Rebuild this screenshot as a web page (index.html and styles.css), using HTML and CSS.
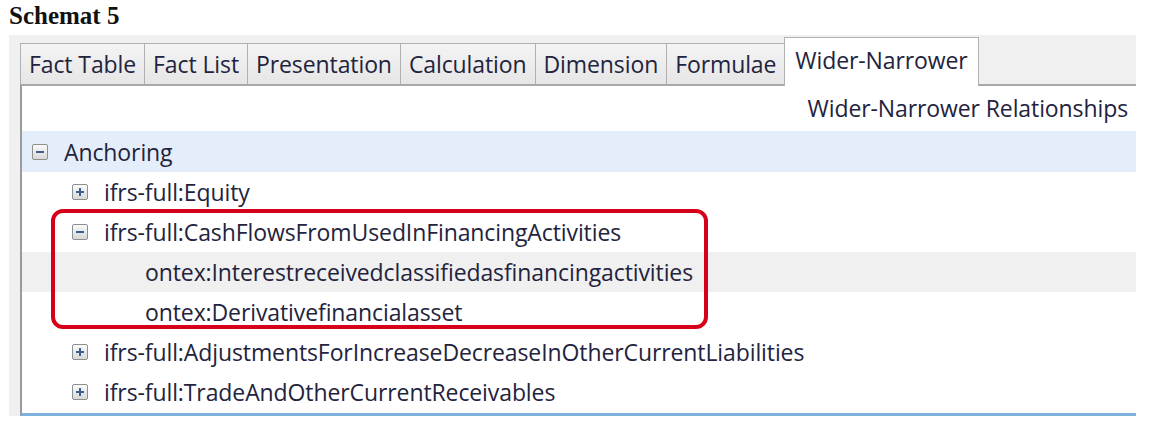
FILE: index.html
```html
<!DOCTYPE html>
<html lang="pl">

<head>
	<meta charset="UTF-8">
	<meta name="viewport" content="width=device-width, initial-scale=1.0">
	<title>Schemat 5</title>
	<link rel="stylesheet" href="styles.css">
</head>

<body>
	<h1 class="caption">Schemat 5</h1>

	<div class="panel">
		<div class="tabs">
			<div class="tab">Fact Table</div>
			<div class="tab">Fact List</div>
			<div class="tab">Presentation</div>
			<div class="tab">Calculation</div>
			<div class="tab">Dimension</div>
			<div class="tab">Formulae</div>
			<div class="tab active">Wider-Narrower</div>
		</div>

		<div class="content">
			<div class="heading">Wider-Narrower Relationships</div>

			<div class="row selected">
				<span class="toggle minus"></span>
				<span class="label">Anchoring</span>
			</div>
			<div class="row level1">
				<span class="toggle plus"></span>
				<span class="label">ifrs-full:Equity</span>
			</div>

			<div class="group marked">
				<div class="row level1">
					<span class="toggle minus"></span>
					<span class="label">ifrs-full:CashFlowsFromUsedInFinancingActivities</span>
				</div>
				<div class="row level2 alt">
					<span class="label">ontex:Interestreceivedclassifiedasfinancingactivities</span>
				</div>
				<div class="row level2">
					<span class="label">ontex:Derivativefinancialasset</span>
				</div>
			</div>

			<div class="row level1">
				<span class="toggle plus"></span>
				<span class="label">ifrs-full:AdjustmentsForIncreaseDecreaseInOtherCurrentLiabilities</span>
			</div>
			<div class="row level1">
				<span class="toggle plus"></span>
				<span class="label">ifrs-full:TradeAndOtherCurrentReceivables</span>
			</div>
		</div>
	</div>
</body>

</html>
```

FILE: styles.css
```css
html,
body {
	margin: 0;
	padding: 0;
	background-color: white;
}

body {
	width: 1156px;
	height: 431px;
	overflow: hidden;
}

.caption {
	margin: 0;
	padding: 1px 0 0 9px;
	height: 35px;
	box-sizing: border-box;
	font-family: "Liberation Serif", serif;
	font-size: 25px;
	font-weight: bold;
	line-height: 30px;
	color: #111;
}

.panel {
	margin-left: 9px;
	width: 1127px;
	height: 381px;
	box-sizing: border-box;
	background-color: #f0f0f0;
	padding-left: 11px;
	font-family: "Open Sans", sans-serif;
	font-size: 23px;
	letter-spacing: -0.1px;
	color: #23233d;
}

.tabs {
	display: flex;
	align-items: flex-end;
	height: 49px;
}

.tab {
	height: 40px;
	line-height: 40px;
	padding: 0 8px;
	border: 1px solid #b0b0b0;
	border-bottom: none;
	border-right: none;
	background: linear-gradient(#f4f4f4, #e6e6e6);
	white-space: nowrap;
}

.tab.active {
	height: 48px;
	line-height: 44px;
	padding: 0 10px;
	background: white;
	border-right: 1px solid #b0b0b0;
	margin-bottom: -2px;
	position: relative;
	z-index: 1;
}

.content {
	background-color: white;
	border-top: 2px solid #a9a9a9;
	border-left: 2px solid #9a9a9a;
	border-bottom: 3px solid #7fb0de;
	height: 332px;
	box-sizing: border-box;
}

.heading {
	height: 45px;
	line-height: 44px;
	text-align: right;
	padding-right: 8px;
}

.row {
	display: flex;
	align-items: center;
	height: 40px;
	padding-left: 10px;
	white-space: nowrap;
}

.row.selected {
	background-color: #e3eefa;
	height: 41px;
}

.row.alt {
	background-color: #f0f0f0;
}

.level1 {
	padding-left: 50px;
}

.level2 {
	padding-left: 123px;
}

.toggle {
	position: relative;
	width: 14px;
	height: 14px;
	border: 1px solid #8e8f8f;
	border-radius: 2px;
	background: linear-gradient(#fafafa, #d8d8d8);
	margin-right: 16px;
	flex: none;
}

.toggle::before,
.toggle::after {
	content: "";
	position: absolute;
	background-color: #3d5e8c;
}

.toggle::before {
	left: 3px;
	right: 3px;
	top: 6px;
	height: 2px;
}

.plus::after {
	top: 3px;
	bottom: 3px;
	left: 6px;
	width: 2px;
}

.group {
	position: relative;
}

.marked::after {
	content: "";
	position: absolute;
	left: 29px;
	top: -3px;
	width: 649px;
	height: 112px;
	border: 4px solid #d7001a;
	border-radius: 12px;
}
```
